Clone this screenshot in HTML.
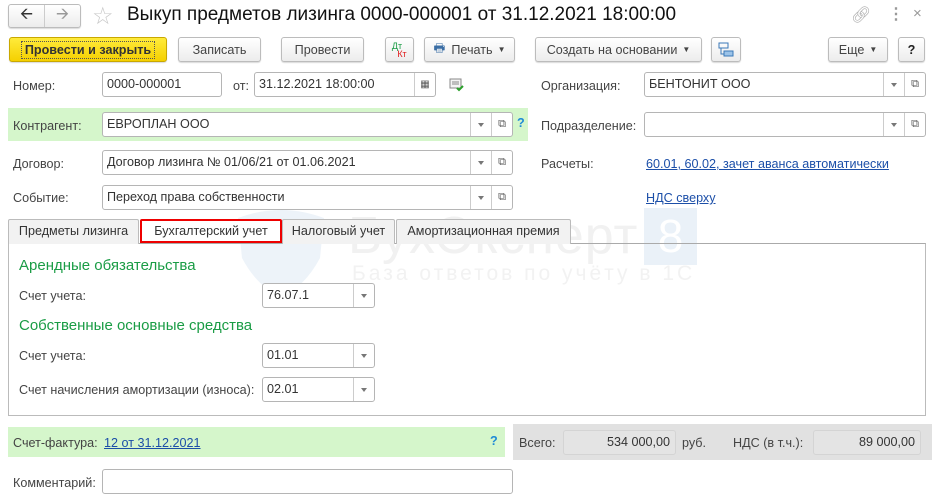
<!DOCTYPE html>
<html><head><meta charset="utf-8"><style>
*{box-sizing:border-box;margin:0;padding:0}
body{width:932px;height:499px;background:#fff;font-family:"Liberation Sans",Arial,sans-serif;font-size:12.6px;color:#333;position:relative;overflow:hidden}
.a{position:absolute}
.btn{position:absolute;height:25px;border:1px solid #bcbcbc;border-radius:3px;background:linear-gradient(#fff,#ececec);box-shadow:0 1px 1px rgba(0,0,0,.15);display:flex;align-items:center;justify-content:center;color:#444;font-size:12.6px}
.inp{position:absolute;height:25px;border:1px solid #b5b5b5;border-radius:3px;background:#fff;padding-left:4px;line-height:23px;color:#333;white-space:nowrap;overflow:hidden}
.dd{position:absolute;top:0;bottom:0;width:21px;border-left:1px solid #ccc;display:flex;align-items:center;justify-content:center}
.dd:after{content:"";border-left:3px solid transparent;border-right:3px solid transparent;border-top:4px solid #777}
.op{position:absolute;top:0;bottom:0;width:21px;border-left:1px solid #ccc;font-size:11px;color:#555;display:flex;align-items:center;justify-content:center}
.lbl{position:absolute;color:#444;line-height:16px}
.lnk{position:absolute;color:#1c4fa8;text-decoration:underline;line-height:16px}
.tab{position:absolute;top:219px;height:25px;border:1px solid #bbb;border-bottom:none;background:#f2f2f2;border-radius:2px 2px 0 0;line-height:23px;text-align:center;color:#333}
.grn{position:absolute;color:#1a9c45;font-size:15px}
</style></head><body>
<!-- watermark -->
<svg class="a" style="left:234px;top:208px" width="95" height="90"><path d="M4 10 Q47 -6 90 10 L86 50 Q70 80 47 88 Q24 80 8 50Z" fill="#edf3f9"/></svg>
<div class="a" style="left:348px;top:206px;font-size:52px;color:#f1f1f1;letter-spacing:1px">БухЭксперт</div>
<div class="a" style="left:644px;top:208px;width:53px;height:57px;background:#eaf1f8;color:#fff;font-size:46px;text-align:center;line-height:57px">8</div>
<div class="a" style="left:352px;top:262px;font-size:21px;color:#f2f2f2;letter-spacing:3px">База ответов по учёту в 1С</div>

<!-- title bar -->
<div class="btn" style="left:8px;top:4px;width:73px;height:24px;padding:0"><span style="width:36px;text-align:center;font-size:16px;color:#333">&#129128;</span><span style="width:1px;height:22px;background:#ccc"></span><span style="width:36px;text-align:center;font-size:16px;color:#999">&#129130;</span></div>
<div class="a" style="left:92px;top:2px;font-size:24px;color:#c8c8c8">☆</div>
<div class="a" style="left:127px;top:4px;font-size:19px;color:#111">Выкуп предметов лизинга 0000-000001 от 31.12.2021 18:00:00</div>
<div class="a" style="left:851px;top:5px;font-size:16px;color:#aaa">🔗︎</div>
<div class="a" style="left:888px;top:4px;font-size:16px;color:#999;font-weight:bold">⋮</div>
<div class="a" style="left:913px;top:5px;font-size:15px;color:#999">×</div>

<!-- toolbar -->
<div class="btn" style="left:9px;top:37px;width:158px;background:linear-gradient(#ffeb3b,#f5d000);border-color:#c9a800;color:#333;font-weight:bold"><span style="border:1px dotted #555;padding:1px 3px">Провести и закрыть</span></div>
<div class="btn" style="left:178px;top:37px;width:83px">Записать</div>
<div class="btn" style="left:281px;top:37px;width:83px">Провести</div>
<div class="btn" style="left:385px;top:37px;width:29px;font-size:9px;line-height:8px;flex-direction:column"><span style="color:#1a9c45;margin-left:-5px">Дт</span><span style="color:#e02020;margin-left:5px">Кт</span></div>
<div class="btn" style="left:424px;top:37px;width:91px"><span style="color:#3b6ea5;margin-right:6px">🖶︎</span>Печать <span style="font-size:8px;margin-left:5px">▼</span></div>
<div class="btn" style="left:535px;top:37px;width:167px">Создать на основании <span style="font-size:8px;margin-left:5px">▼</span></div>
<div class="btn" style="left:711px;top:37px;width:30px"><svg width="16" height="16"><rect x="1" y="1" width="9" height="5" fill="none" stroke="#3a78b8"/><rect x="6" y="9" width="9" height="5" fill="#9cc3e8" stroke="#3a78b8"/><path d="M3 6v6h3" fill="none" stroke="#3a78b8"/></svg></div>
<div class="btn" style="left:828px;top:37px;width:60px">Еще <span style="font-size:8px;margin-left:5px">▼</span></div>
<div class="btn" style="left:898px;top:37px;width:27px;color:#222;font-weight:bold">?</div>

<!-- row 1 -->
<div class="lbl" style="left:13px;top:78px">Номер:</div>
<div class="inp" style="left:102px;top:72px;width:120px">0000-000001</div>
<div class="lbl" style="left:233px;top:78px">от:</div>
<div class="inp" style="left:254px;top:72px;width:182px">31.12.2021 18:00:00<div class="op" style="right:0;font-size:10px">▦</div></div>
<svg class="a" style="left:449px;top:78px" width="16" height="14"><rect x="1" y="1" width="11" height="9" fill="#f4f4f4" stroke="#888"/><path d="M3 4h7M3 6h7" stroke="#888"/><path d="M8 10l2 2 4-4" stroke="#2aa02a" stroke-width="2" fill="none"/></svg>
<div class="lbl" style="left:541px;top:78px">Организация:</div>
<div class="inp" style="left:644px;top:72px;width:282px">БЕНТОНИТ ООО<div class="dd" style="right:21px"></div><div class="op" style="right:0">⧉</div></div>

<!-- green row -->
<div class="a" style="left:8px;top:108px;width:520px;height:33px;background:#d5f6cb"></div>
<div class="lbl" style="left:13px;top:118px">Контрагент:</div>
<div class="inp" style="left:102px;top:112px;width:411px">ЕВРОПЛАН ООО<div class="dd" style="right:21px"></div><div class="op" style="right:0">⧉</div></div>
<div class="a" style="left:517px;top:116px;color:#1e8ad6;font-weight:bold">?</div>
<div class="lbl" style="left:541px;top:118px">Подразделение:</div>
<div class="inp" style="left:644px;top:112px;width:282px"><div class="dd" style="right:21px"></div><div class="op" style="right:0">⧉</div></div>

<div class="lbl" style="left:13px;top:156px">Договор:</div>
<div class="inp" style="left:102px;top:150px;width:411px">Договор лизинга № 01/06/21 от 01.06.2021<div class="dd" style="right:21px"></div><div class="op" style="right:0">⧉</div></div>
<div class="lbl" style="left:541px;top:156px">Расчеты:</div>
<div class="lnk" style="left:646px;top:156px">60.01, 60.02, зачет аванса автоматически</div>

<div class="lbl" style="left:13px;top:190px">Событие:</div>
<div class="inp" style="left:102px;top:185px;width:411px">Переход права собственности<div class="dd" style="right:21px"></div><div class="op" style="right:0">⧉</div></div>
<div class="lnk" style="left:646px;top:190px">НДС сверху</div>

<!-- tabs -->
<div class="a" style="left:8px;top:243px;width:918px;height:173px;border:1px solid #bbb;border-top:1px solid #aaa"></div>
<div class="tab" style="left:8px;width:131px">Предметы лизинга</div>
<div class="tab" style="left:140px;width:142px;background:#fff;border:2px solid #e00;height:24px;line-height:20px;z-index:2">Бухгалтерский учет</div>
<div class="tab" style="left:282px;width:113px">Налоговый учет</div>
<div class="tab" style="left:396px;width:175px">Амортизационная премия</div>

<div class="grn" style="left:19px;top:257px">Арендные обязательства</div>
<div class="lbl" style="left:19px;top:288px">Счет учета:</div>
<div class="inp" style="left:262px;top:283px;width:113px">76.07.1<div class="dd" style="right:0"></div></div>
<div class="grn" style="left:19px;top:317px">Собственные основные средства</div>
<div class="lbl" style="left:19px;top:348px">Счет учета:</div>
<div class="inp" style="left:262px;top:343px;width:113px">01.01<div class="dd" style="right:0"></div></div>
<div class="lbl" style="left:19px;top:382px">Счет начисления амортизации (износа):</div>
<div class="inp" style="left:262px;top:377px;width:113px">02.01<div class="dd" style="right:0"></div></div>

<!-- bottom -->
<div class="a" style="left:8px;top:427px;width:497px;height:30px;background:#d5f6cb"></div>
<div class="lbl" style="left:13px;top:435px">Счет-фактура:</div>
<div class="lnk" style="left:104px;top:435px">12 от 31.12.2021</div>
<div class="a" style="left:490px;top:434px;color:#1e8ad6;font-weight:bold">?</div>
<div class="a" style="left:513px;top:424px;width:419px;height:36px;background:#e1e1e1"></div>
<div class="lbl" style="left:519px;top:435px">Всего:</div>
<div class="inp" style="left:563px;top:430px;width:113px;background:#e4e4e4;border-color:#d4d4d4;text-align:right;padding-right:5px">534 000,00</div>
<div class="lbl" style="left:682px;top:435px">руб.</div>
<div class="lbl" style="left:733px;top:435px">НДС (в т.ч.):</div>
<div class="inp" style="left:813px;top:430px;width:108px;background:#e4e4e4;border-color:#d4d4d4;text-align:right;padding-right:5px">89 000,00</div>

<div class="lbl" style="left:13px;top:475px">Комментарий:</div>
<div class="inp" style="left:102px;top:469px;width:411px"></div>
</body></html>
